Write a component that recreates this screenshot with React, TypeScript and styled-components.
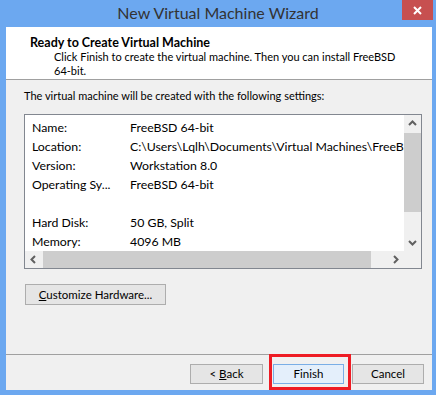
import styled, { createGlobalStyle } from "styled-components";

const GlobalStyle = createGlobalStyle`
  html, body {
    margin: 0;
    padding: 0;
    background: #6ca8f0;
  }
  * {
    box-sizing: border-box;
  }
`;

const FONT = `Lato, "Noto Sans", sans-serif`;

const Frame = styled.div`
  width: 436px;
  height: 395px;
  background: #6ca8f0;
  display: flex;
  flex-direction: column;
  font-family: ${FONT};
  font-size: 11px;
  color: #000;
`;

const TitleBar = styled.div`
  height: 27px;
  display: grid;
  grid-template-columns: 1fr auto 1fr;
  align-items: start;
`;

const Title = styled.div`
  grid-column: 2;
  font-size: 16px;
  line-height: 25px;
  color: #333;
  white-space: nowrap;
`;

const CloseButton = styled.div`
  grid-column: 3;
  justify-self: end;
  margin-right: 3px;
  width: 31px;
  height: 20px;
  background: #c75050;
  display: flex;
  align-items: center;
  justify-content: center;
`;

const Client = styled.div`
  margin: 0 4px 5px 6px;
  flex: 1;
  background: #f0f0f0;
  display: flex;
  flex-direction: column;
`;

const Header = styled.div`
  height: 53px;
  background: #fff;
  border-bottom: 1px solid #a0a0a0;
  padding: 9px 0 0 24px;
  line-height: 14px;
  white-space: nowrap;
`;

const Heading = styled.div`
  font-weight: bold;
  font-size: 12.5px;
`;

const Subtitle = styled.div`
  padding-left: 24px;
`;

const Body = styled.div`
  flex: 1;
  padding: 9px 10px 0 18px;
  display: flex;
  flex-direction: column;
`;

const Intro = styled.div`
  line-height: 14px;
`;

const ListBox = styled.div`
  margin-top: 11px;
  height: 155px;
  border: 1px solid #828790;
  background: #fff;
  display: grid;
  grid-template-columns: 1fr 17px;
  grid-template-rows: 1fr 17px;
`;

const ListContent = styled.div`
  overflow: hidden;
  padding: 3px 0 0 7px;
  font-size: 12.3px;
`;

const Row = styled.div`
  display: grid;
  grid-template-columns: 98px max-content;
  height: 19px;
  line-height: 19px;
  white-space: nowrap;
`;

const VScroll = styled.div`
  background: #f0f0f0;
  display: flex;
  flex-direction: column;
`;

const HScroll = styled.div`
  background: #f0f0f0;
  display: flex;
`;

const Corner = styled.div`
  background: #f0f0f0;
`;

const Arrow = styled.div`
  width: 17px;
  height: 17px;
  flex: none;
  display: flex;
  align-items: center;
  justify-content: center;
`;

const Track = styled.div<{ $vertical?: boolean }>`
  flex: 1;
  display: flex;
  flex-direction: ${(p) => (p.$vertical ? "column" : "row")};
  padding: ${(p) => (p.$vertical ? "1px 0 0 0" : "0 0 0 1px")};
`;

const Thumb = styled.div`
  background: #cdcdcd;
  flex: none;
`;

const Button = styled.div<{ $width: number; $default?: boolean }>`
  width: ${(p) => p.$width}px;
  height: 20px;
  border: 1px solid ${(p) => (p.$default ? "#7aaee6" : "#adadad")};
  background: ${(p) => (p.$default ? "#e4effb" : "#e5e5e5")};
  display: flex;
  align-items: center;
  justify-content: center;
  line-height: 16px;
  font-size: 11.5px;
  white-space: nowrap;
  u {
    text-decoration: underline;
  }
`;

const CustomizeButton = styled(Button)`
  margin-top: 15px;
  margin-left: 1px;
  height: 21px;
`;

const Footer = styled.div`
  height: 36px;
  border-top: 1px solid #a0a0a0;
  padding: 9px 0 0 184px;
  display: flex;
  align-items: flex-start;
`;

const ButtonSlot = styled.div<{ $gap: number }>`
  position: relative;
  margin-left: ${(p) => p.$gap}px;
`;

const Highlight = styled.div`
  position: absolute;
  left: -4px;
  top: -10px;
  width: 82px;
  height: 36px;
  border: 3px solid #ee1c24;
  pointer-events: none;
`;

const Chevron = ({ dir }: { dir: "up" | "down" | "left" | "right" }) => {
  const pts = {
    up: "1,6 4.5,2.5 8,6",
    down: "1,3 4.5,6.5 8,3",
    left: "6,1 2.5,4.5 6,8",
    right: "3,1 6.5,4.5 3,8",
  }[dir];
  return (
    <svg width="9" height="9" viewBox="0 0 9 9">
      <polyline points={pts} fill="none" stroke="#606060" strokeWidth="2" />
    </svg>
  );
};

const settings: [string, string][] = [
  ["Name:", "FreeBSD 64-bit"],
  ["Location:", "C:\\Users\\Lqlh\\Documents\\Virtual Machines\\FreeBSD 64-bit"],
  ["Version:", "Workstation 8.0"],
  ["Operating Sy...", "FreeBSD 64-bit"],
  ["", ""],
  ["Hard Disk:", "50 GB, Split"],
  ["Memory:", "4096 MB"],
];

export default function App() {
  return (
    <>
      <GlobalStyle />
      <Frame>
        <TitleBar>
          <Title>New Virtual Machine Wizard</Title>
          <CloseButton>
            <svg width="9" height="9" viewBox="0 0 9 9">
              <path d="M1 1L8 8M8 1L1 8" stroke="#fff" strokeWidth="2" />
            </svg>
          </CloseButton>
        </TitleBar>
        <Client>
          <Header>
            <Heading>Ready to Create Virtual Machine</Heading>
            <Subtitle>
              Click Finish to create the virtual machine. Then you can install FreeBSD
              <br />
              64-bit.
            </Subtitle>
          </Header>
          <Body>
            <Intro>The virtual machine will be created with the following settings:</Intro>
            <ListBox>
              <ListContent>
                {settings.map(([k, v], i) => (
                  <Row key={i}>
                    <span>{k}</span>
                    <span>{v}</span>
                  </Row>
                ))}
              </ListContent>
              <VScroll>
                <Arrow>
                  <Chevron dir="up" />
                </Arrow>
                <Track $vertical>
                  <Thumb style={{ height: 79 }} />
                </Track>
                <Arrow>
                  <Chevron dir="down" />
                </Arrow>
              </VScroll>
              <HScroll>
                <Arrow>
                  <Chevron dir="left" />
                </Arrow>
                <Track>
                  <Thumb style={{ width: 328 }} />
                </Track>
                <Arrow>
                  <Chevron dir="right" />
                </Arrow>
              </HScroll>
              <Corner />
            </ListBox>
            <CustomizeButton $width={141}>
              <span>
                <u>C</u>ustomize Hardware...
              </span>
            </CustomizeButton>
          </Body>
          <Footer>
            <ButtonSlot $gap={0}>
              <Button $width={73}>
                <span>
                  &lt; <u>B</u>ack
                </span>
              </Button>
            </ButtonSlot>
            <ButtonSlot $gap={10}>
              <Button $width={71} $default>
                Finish
              </Button>
              <Highlight />
            </ButtonSlot>
            <ButtonSlot $gap={8}>
              <Button $width={72}>Cancel</Button>
            </ButtonSlot>
          </Footer>
        </Client>
      </Frame>
    </>
  );
}
